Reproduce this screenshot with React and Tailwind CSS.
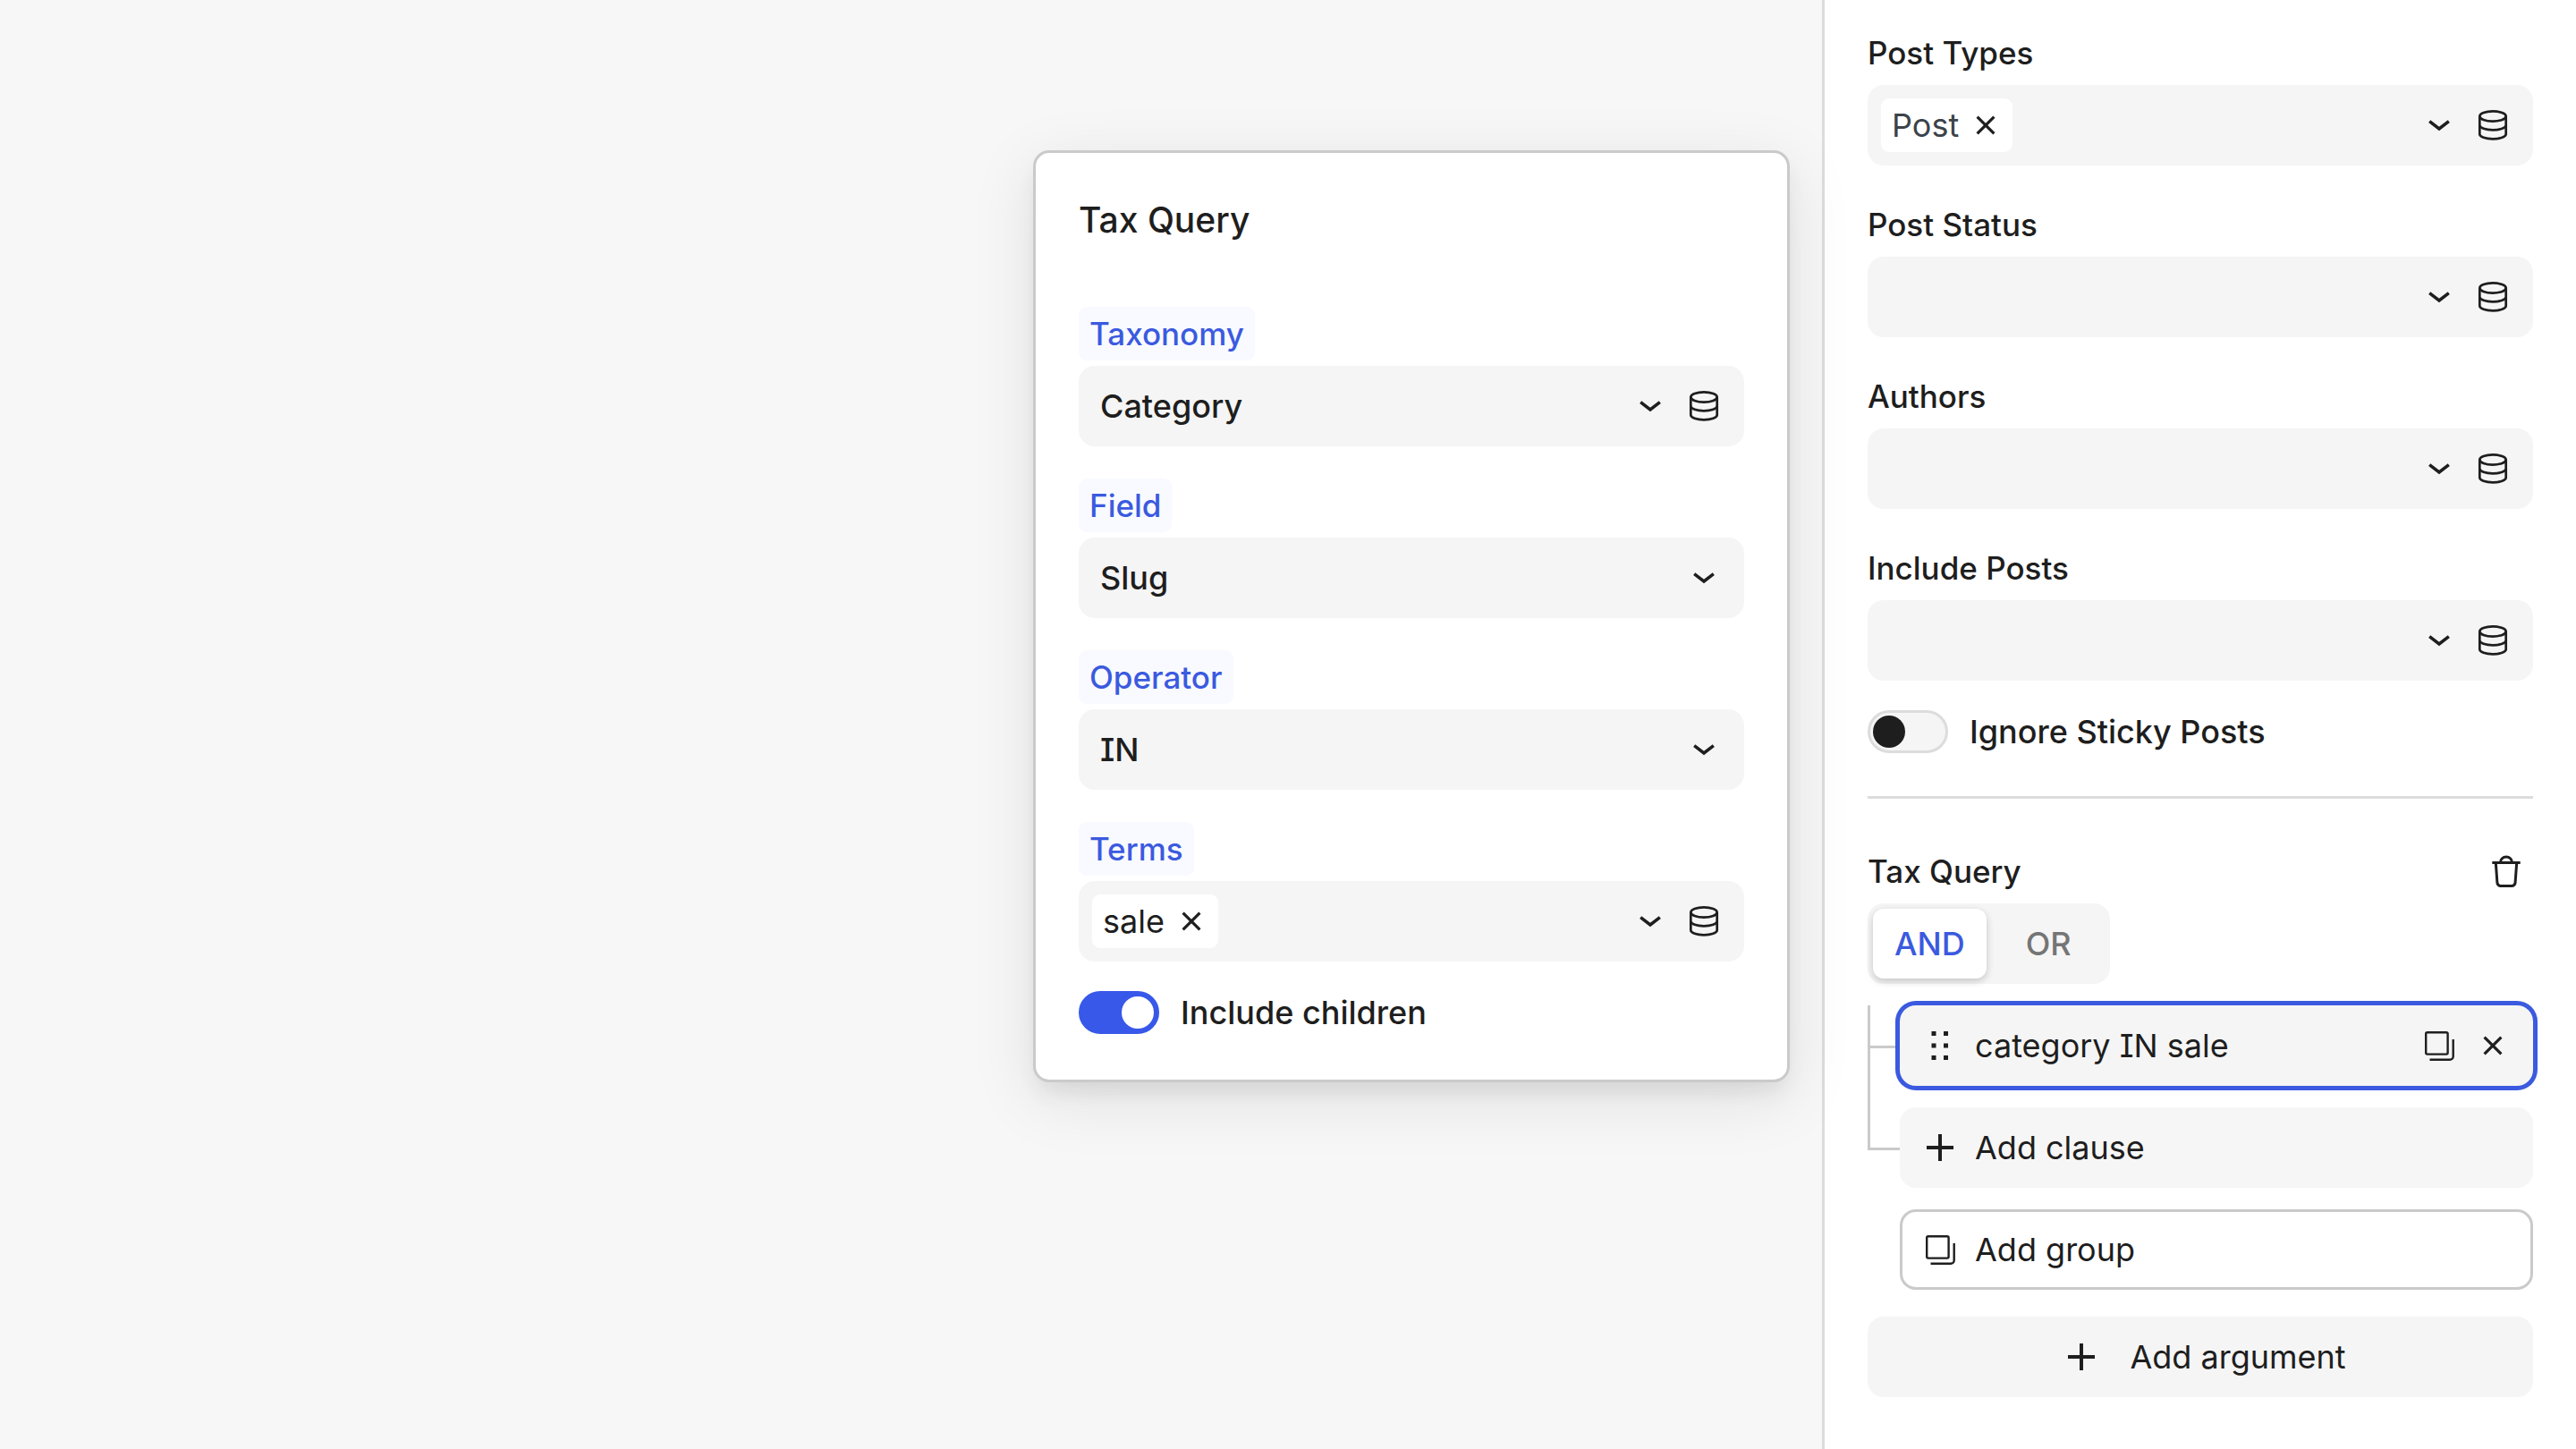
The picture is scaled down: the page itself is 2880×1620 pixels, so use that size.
import clsx from "clsx";
import { useId, useState } from "react";

const ChevronIcon = () => (
    <svg className="h-9 w-9" viewBox="0 0 36 36" fill="none" stroke="currentColor" strokeWidth="3.5" aria-hidden="true">
        <path d="M7.2 13.6l10.8 8.4 10.8-8.4" />
    </svg>
);

const DatabaseIcon = () => (
    <svg className="h-9 w-9" viewBox="0 0 36 36" fill="none" stroke="currentColor" strokeWidth="2.7" aria-hidden="true">
        <ellipse cx="18" cy="8" rx="14.7" ry="5.6" />
        <path d="M3.3 8v20c0 3 6.6 5.4 14.7 5.4s14.7-2.4 14.7-5.4V8" />
        <path d="M3.3 18c0 3 6.6 5.4 14.7 5.4s14.7-2.4 14.7-5.4" />
    </svg>
);

const CloseIcon = () => (
    <svg className="h-9 w-9" viewBox="0 0 36 36" fill="none" stroke="currentColor" strokeWidth="3.2" aria-hidden="true">
        <path d="M8.6 8.6l18.8 18.8M27.4 8.6l-18.8 18.8" />
    </svg>
);

const PlusIcon = () => (
    <svg className="h-9 w-9" viewBox="0 0 36 36" fill="none" stroke="currentColor" strokeWidth="4" aria-hidden="true">
        <path d="M18 3v30M3 18h30" />
    </svg>
);

const CopyIcon = () => (
    <svg className="h-9 w-9" viewBox="0 0 36 36" fill="none" stroke="currentColor" strokeWidth="2.4" aria-hidden="true">
        <rect x="3.2" y="3.2" width="24.4" height="24.4" rx="1.6" />
        <path d="M33.7 11v19a3.7 3.7 0 0 1-3.7 3.7H7.5" />
    </svg>
);

const GripIcon = () => (
    <svg className="h-9 w-9" viewBox="0 0 36 36" fill="currentColor" aria-hidden="true">
        {[2, 15.5, 29].map((y) =>
            <g key={y}>
                <rect x="8.5" y={y} width="5" height="5" />
                <rect x="22" y={y} width="5" height="5" />
            </g>
        )}
    </svg>
);

const TrashIcon = () => (
    <svg className="h-9 w-9" viewBox="0 0 36 36" fill="none" stroke="currentColor" strokeWidth="3" aria-hidden="true">
        <path d="M2.3 8.4h31.4M11.5 8.4a6.5 6.5 0 0 1 13 0" />
        <path d="M6.3 8.4l1.6 22.2a4 4 0 0 0 4 3.9h12.2a4 4 0 0 0 4-3.9l1.6-22.2" />
    </svg>
);

function IconButton({ label, children }) {
    return (
        <button type="button" aria-label={label} className="flex h-15 w-15 shrink-0 items-center justify-center">
            {children}
        </button>
    );
}

function Field({ label, highlight, value, options, chip, chipClass, dynamic }) {
    const id = useId();

    return (
        <div className="flex flex-col items-start gap-1.5">
            <label
                htmlFor={id}
                className={clsx("h-15 text-[35px] leading-[60px] font-medium", highlight && "rounded-[9px] bg-[#f9faff] px-3 text-[#3b5adf]")}
            >
                {label}
            </label>
            <div className="flex h-[90px] w-full items-center rounded-[18px] bg-[#f5f5f5] px-[15px]">
                {chip &&
                    <span className={clsx("flex h-15 shrink-0 items-center rounded-[9px] bg-white pl-3", chipClass)}>
                        {chip}
                        <span className="text-[#1e1e1e]"><IconButton label={`Remove ${chip}`}><CloseIcon /></IconButton></span>
                    </span>
                }
                {options ? (
                    <>
                        <select id={id} defaultValue={value} className={clsx("h-full min-w-0 flex-1 appearance-none bg-transparent pl-[9px] font-medium outline-none", value === "IN" && "[font-feature-settings:'cv08']")}>
                            {options.map((o) => <option key={o}>{o}</option>)}
                        </select>
                        <span className="pointer-events-none flex w-15 shrink-0 justify-center"><ChevronIcon /></span>
                    </>
                ) : (
                    <>
                        <input id={id} type="text" className="h-full min-w-0 flex-1 bg-transparent px-[9px] outline-none" />
                        <IconButton label={`Open ${label}`}><ChevronIcon /></IconButton>
                    </>
                )}
                {dynamic && <IconButton label={`Dynamic data for ${label}`}><DatabaseIcon /></IconButton>}
            </div>
        </div>
    );
}

function Toggle({ label, defaultChecked }) {
    return (
        <label className="flex items-center gap-6 font-medium">
            <input
                type="checkbox"
                role="switch"
                defaultChecked={defaultChecked}
                className="flex h-12 w-[90px] shrink-0 appearance-none items-center rounded-full border-3 border-[#dcdcdc] bg-[#f5f5f5] px-[3px] before:h-9 before:w-9 before:rounded-full before:bg-[#1e1e1e] checked:justify-end checked:border-[#3858e9] checked:bg-[#3858e9] checked:before:bg-white"
            />
            {label}
        </label>
    );
}

function TaxQueryPopover() {
    return (
        <section className="w-[846px] rounded-[18px] border-3 border-[#cacaca] bg-white p-12 shadow-[0_18px_72px_rgba(25,25,25,0.1),0_15px_24px_-6px_rgba(25,25,25,0.09)]">
            <h2 className="text-[39px] leading-[54px] font-medium">Tax Query</h2>
            <div className="mt-[70px] flex flex-col gap-9">
                <Field label="Taxonomy" highlight value="Category" options={["Category", "Tag"]} dynamic />
                <Field label="Field" highlight value="Slug" options={["Slug", "Name", "Term ID"]} />
                <Field label="Operator" highlight value="IN" options={["IN", "NOT IN", "AND"]} />
                <Field label="Terms" highlight chip="sale" dynamic />
            </div>
            <div className="mt-[30px]">
                <Toggle label="Include children" defaultChecked />
            </div>
        </section>
    );
}

function Relation() {
    const [relation, setRelation] = useState("AND");

    return (
        <div className="inline-grid grid-cols-2 gap-1.5 self-start rounded-[18px] bg-[#f5f5f5] p-1.5">
            {["AND", "OR"].map((r) =>
                <button
                    key={r}
                    type="button"
                    aria-pressed={relation === r}
                    onClick={() => setRelation(r)}
                    className={clsx("h-[78px] rounded-xl px-6 font-medium", relation === r ? "bg-white text-[#3b5adf] shadow-[0_3px_9px_rgba(0,0,0,0.2)]" : "text-[#757575]")}
                >
                    {r}
                </button>
            )}
        </div>
    );
}

function Clauses() {
    return (
        <ul>
            <li className="flex">
                <span className="w-9 shrink-0 border-l-3 border-[#cacaca] pt-[45px]">
                    <span className="block h-[3px] bg-[#cacaca]" />
                </span>
                <div className="mb-6 flex h-[90px] flex-1 items-center rounded-[18px] bg-[#f5f5f5] px-[15px] ring-5 ring-[#3b5adf]">
                    <IconButton label="Move clause"><GripIcon /></IconButton>
                    <button type="button" className="flex-1 pl-[9px] text-left [font-feature-settings:'cv08']">category IN sale</button>
                    <IconButton label="Duplicate clause"><CopyIcon /></IconButton>
                    <IconButton label="Remove clause"><CloseIcon /></IconButton>
                </div>
            </li>
            <li className="flex">
                <span className="h-12 w-9 shrink-0 border-b-3 border-l-3 border-[#cacaca]" />
                <button type="button" className="flex h-[90px] flex-1 items-center gap-[9px] rounded-[18px] bg-[#f6f6f6] px-[15px]">
                    <span className="flex w-15 justify-center"><PlusIcon /></span>
                    Add clause
                </button>
            </li>
            <li className="mt-6 flex pl-9">
                <button type="button" className="flex h-[90px] flex-1 items-center gap-[9px] rounded-[18px] border-3 border-[#cacaca] px-3">
                    <span className="flex w-15 justify-center"><CopyIcon /></span>
                    Add group
                </button>
            </li>
        </ul>
    );
}

export default function App() {
    return (
        <div className="flex min-h-screen bg-[#f7f7f7] font-['Inter',sans-serif] text-[36px] leading-[54px] text-[#1e1e1e] [font-optical-sizing:none]">
            <main className="relative z-10 flex flex-1 items-start justify-end pt-[168px] pr-9">
                <TaxQueryPopover />
            </main>
            <aside className="w-[843px] shrink-0 border-l-3 border-[#dcdcdc] bg-white px-12 pt-[29px] pb-12">
                <div className="flex flex-col gap-9">
                    <Field label="Post Types" chip="Post" chipClass="text-[#3c434a]" dynamic />
                    <Field label="Post Status" dynamic />
                    <Field label="Authors" dynamic />
                    <Field label="Include Posts" dynamic />
                </div>
                <div className="mt-[30px] border-b-3 border-[#dcdcdc] pb-[45px]">
                    <Toggle label="Ignore Sticky Posts" />
                </div>
                <section className="mt-[51px] flex flex-col">
                    <div className="mb-1.5 flex h-15 items-center justify-between">
                        <h2 className="text-[35px] font-medium">Tax Query</h2>
                        <IconButton label="Remove tax query"><TrashIcon /></IconButton>
                    </div>
                    <Relation />
                    <div className="mt-6"><Clauses /></div>
                </section>
                <button type="button" className="mt-[30px] flex h-[90px] w-full items-center justify-center gap-6 rounded-[18px] bg-[#f5f5f5]">
                    <span className="flex w-15 justify-center"><PlusIcon /></span>
                    Add argument
                </button>
            </aside>
        </div>
    );
}
